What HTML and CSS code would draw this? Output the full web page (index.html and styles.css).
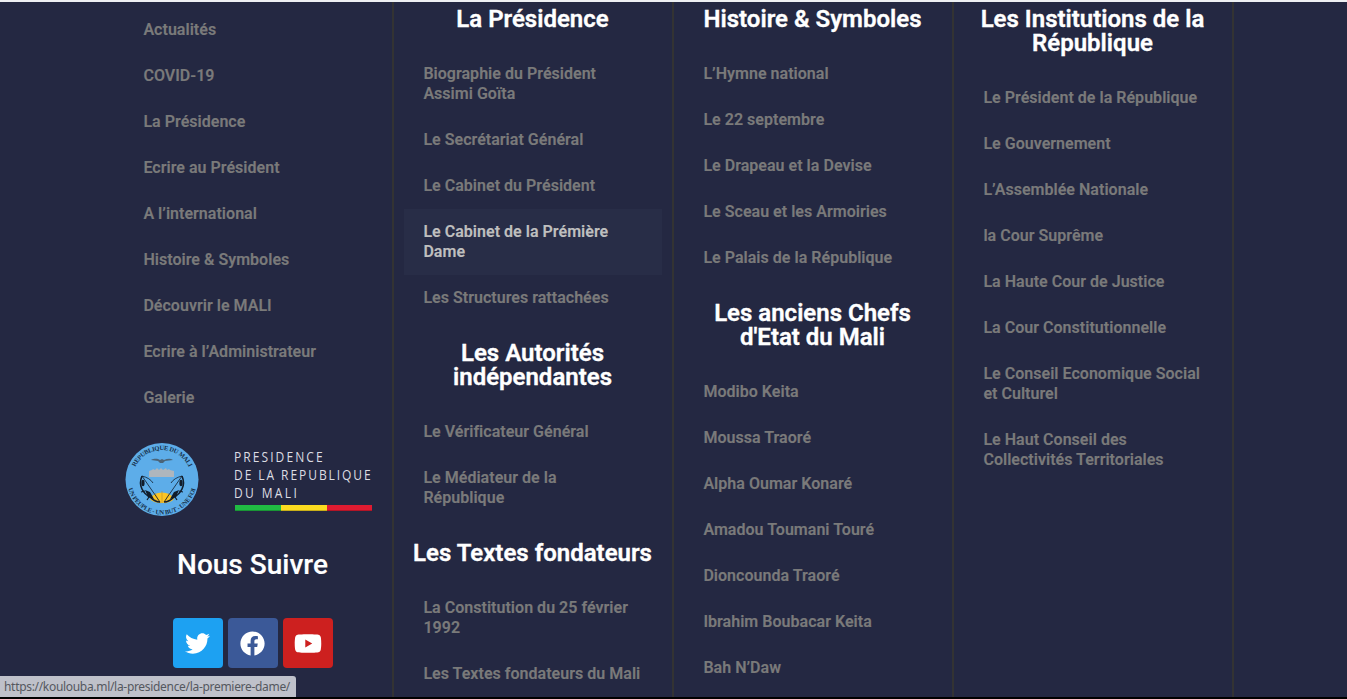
FILE: index.html
```html
<!DOCTYPE html>
<html lang="fr">
<head>
<meta charset="utf-8">
<title>Présidence de la République du Mali</title>
<link rel="stylesheet" href="styles.css">
</head>
<body>
<footer class="footer">
  <div class="column">
    <ul class="menu">
      <li><a>Actualités</a></li><li><a>COVID-19</a></li><li><a>La Présidence</a></li><li><a>Ecrire au Président</a></li><li><a>A l’international</a></li><li><a>Histoire &amp; Symboles</a></li><li><a>Découvrir le MALI</a></li><li><a>Ecrire à l’Administrateur</a></li><li><a>Galerie</a></li>
    </ul>
    <svg class="logo" viewBox="20 0 258 80" width="258" height="80">
      <defs>
        <path id="arc-top" d="M28.500 38.500a29.500 29.500 0 0 1 59 0"/>
        <path id="arc-bottom" d="M23 38.500a35 35 0 0 0 70 0"/>
      </defs>
      <circle cx="58" cy="38.500" r="36.500" fill="#5dade9"/>
      <text class="seal-text"><textPath href="#arc-top" startOffset="50%" text-anchor="middle" textLength="67">REPUBLIQUE DU MALI</textPath></text>
      <text class="seal-text"><textPath href="#arc-bottom" startOffset="50%" text-anchor="middle" textLength="91">UN PEUPLE - UN BUT - UNE FOI</textPath></text>
      <path d="M47 19c4-2 7-1 9 0l2-1 2 1c3-1 6-2 9 0l-8 1-2 2h-3l-2-2z" fill="#4b6478"/>
      <path d="M45 36v-6l3-1 1-1 2 1 2-2 2 2 2-2 2 2 3-2 1 2 2-1 1 1 4 1v6z" fill="#aeb6bd"/>
      <path d="M46 58a12.500 9 0 0 1 24 0q-3 4-12 4t-12-4z" fill="#fbc525"/>
      <path d="M58 62V50m-3 11-4-9m10 9 4-9m-8 10-9-5m13 5 9-5" stroke="#b98c30" stroke-width=".6" fill="none"/>
      <g fill="none" stroke="#111d2b">
        <path d="M38 35l18 26M78 35 60 61M38 35q8 2 11 7M78 35q-8 2-11 7" stroke-width=".8"/>
        <path d="M38 35q-3 7 0 13 3 6 8 8 5 5 10 5M78 35q3 7 0 13-3 6-8 8-5 5-10 5" stroke-width="1.600"/>
        <path d="M41 50l-4 1m8 5-2 3m32-9 4 1m-8 5 2 3" stroke-width="1.200"/>
      </g>
      <ellipse cx="39" cy="42" rx="1.600" ry="3.200" fill="#111d2b"/>
      <ellipse cx="77" cy="42" rx="1.600" ry="3.200" fill="#111d2b"/>
      <path d="M41 49l5 2 4 7-6-2zM75 49l-5 2-4 7 6-2z" fill="#111d2b"/>
      <g class="logo-text" transform="translate(130 0) scale(.86 1)">
        <text x="0" y="21.300" textLength="103">PRESIDENCE</text>
        <text x="0" y="39" textLength="159">DE LA REPUBLIQUE</text>
        <text x="0" y="56.600" textLength="73">DU MALI</text>
      </g>
      <path d="M131 64h46v6h-46z" fill="#20bb43"/><path d="M177 64h46v6h-46z" fill="#fbdb20"/><path d="M223 64h45v6h-45z" fill="#df1b31"/>
      <path d="M131 69h137v1H131z" fill="#000" opacity=".2"/>
    </svg>
    <h2 class="follow">Nous Suivre</h2>
    <div class="social">
      <a class="social-link twitter"><svg viewBox="0 0 512 512" width="25" height="25"><path d="M459.370 151.716c.325 4.548.325 9.097.325 13.645 0 138.720-105.583 298.558-298.558 298.558-59.452 0-114.680-17.219-161.137-47.106 8.447.974 16.568 1.299 25.340 1.299 49.055 0 94.213-16.568 130.274-44.832-46.132-.975-84.792-31.188-98.112-72.772 6.498.974 12.995 1.624 19.818 1.624 9.421 0 18.843-1.300 27.614-3.573-48.081-9.747-84.143-51.980-84.143-102.985v-1.299c13.969 7.797 30.214 12.670 47.431 13.319-28.264-18.843-46.781-51.005-46.781-87.391 0-19.492 5.197-37.360 14.294-52.954 51.655 63.675 129.300 105.258 216.365 109.807-1.624-7.797-2.599-15.918-2.599-24.040 0-57.828 46.782-104.934 104.934-104.934 30.213 0 57.502 12.670 76.670 33.137 23.715-4.548 46.456-13.320 66.599-25.340-7.798 24.366-24.366 44.833-46.132 57.827 21.117-2.273 41.584-8.122 60.426-16.243-14.292 20.791-32.161 39.308-52.628 54.253z"/></svg></a>
      <a class="social-link facebook"><svg viewBox="0 0 512 512" width="25" height="25"><path d="M504 256C504 119 393 8 256 8S8 119 8 256c0 123.780 90.690 226.380 209.250 245V327.690h-63V256h63v-54.640c0-62.150 37-96.480 93.670-96.480 27.140 0 55.520 4.840 55.520 4.840v61h-31.280c-30.800 0-40.410 19.120-40.410 38.730V256h68.780l-11 71.690h-57.780V501C413.310 482.380 504 379.780 504 256z"/></svg></a>
      <a class="social-link youtube"><svg viewBox="0 0 576 512" width="28" height="25"><path d="M549.655 124.083c-6.281-23.650-24.787-42.276-48.284-48.597C458.781 64 288 64 288 64S117.220 64 74.629 75.486c-23.497 6.322-42.003 24.947-48.284 48.597-11.412 42.867-11.412 132.305-11.412 132.305s0 89.438 11.412 132.305c6.281 23.650 24.787 41.500 48.284 47.821C117.220 448 288 448 288 448s170.780 0 213.371-11.486c23.497-6.321 42.003-24.171 48.284-47.821 11.412-42.867 11.412-132.305 11.412-132.305s0-89.438-11.412-132.305zm-317.510 213.508V175.185l142.739 81.205-142.739 81.201z"/></svg></a>
    </div>
  </div>
  <div class="column">
    <h3 class="heading">La Présidence</h3>
    <ul class="menu">
      <li><a>Biographie du Président Assimi Goïta</a></li><li><a>Le Secrétariat Général</a></li><li><a>Le Cabinet du Président</a></li><li><a class="active">Le Cabinet de la Prémière Dame</a></li><li><a>Les Structures rattachées</a></li>
    </ul>
    <h3 class="heading">Les Autorités indépendantes</h3>
    <ul class="menu">
      <li><a>Le Vérificateur Général</a></li><li><a>Le Médiateur de la<br>République</a></li>
    </ul>
    <h3 class="heading">Les Textes fondateurs</h3>
    <ul class="menu">
      <li><a>La Constitution du 25 février 1992</a></li><li><a>Les Textes fondateurs du Mali</a></li>
    </ul>
  </div>
  <div class="column">
    <h3 class="heading">Histoire &amp; Symboles</h3>
    <ul class="menu">
      <li><a>L’Hymne national</a></li><li><a>Le 22 septembre</a></li><li><a>Le Drapeau et la Devise</a></li><li><a>Le Sceau et les Armoiries</a></li><li><a>Le Palais de la République</a></li>
    </ul>
    <h3 class="heading">Les anciens Chefs d'Etat du Mali</h3>
    <ul class="menu">
      <li><a>Modibo Keita</a></li><li><a>Moussa Traoré</a></li><li><a>Alpha Oumar Konaré</a></li><li><a>Amadou Toumani Touré</a></li><li><a>Dioncounda Traoré</a></li><li><a>Ibrahim Boubacar Keita</a></li><li><a>Bah N’Daw</a></li>
    </ul>
  </div>
  <div class="column">
    <h3 class="heading">Les Institutions de la République</h3>
    <ul class="menu">
      <li><a>Le Président de la République</a></li><li><a>Le Gouvernement</a></li><li><a>L’Assemblée Nationale</a></li><li><a>la Cour Suprême</a></li><li><a>La Haute Cour de Justice</a></li><li><a>La Cour Constitutionnelle</a></li><li><a>Le Conseil Economique Social et Culturel</a></li><li><a>Le Haut Conseil des Collectivités Territoriales</a></li>
    </ul>
  </div>
</footer>
<div class="status">https://koulouba.ml/la-presidence/la-premiere-dame/</div>
</body>
</html>
```
FILE: styles.css
```css
* { box-sizing: border-box; }
body {
  margin: 0;
  height: 699px;
  overflow: hidden;
  background: #242842;
  border-top: 2px solid #eef0f3;
  border-bottom: 2px solid #000;
  font-family: Roboto, sans-serif;
}
.footer {
  display: flex;
  width: 1120px;
  height: 695px;
  margin-left: 114px;
}
.column {
  display: flex;
  flex-direction: column;
  gap: 20px;
  width: 280px;
  padding: 5px 10px 0;
  border-right: 2px solid #333;
}
.menu { margin: 0; padding: 0; list-style: none; }
.menu a {
  display: block;
  padding: 13px 19px 13px 19.4px;
  color: #7a7a7a;
  font-size: 16px;
  font-weight: 600;
  line-height: 20px;
  letter-spacing: .03px;
  -webkit-text-stroke: .15px currentColor;
}
.menu .active { color: #bfbfbf; background: #282d47; }
.heading {
  margin: 0 1px 0 0;
  color: #fff;
  font-size: 24px;
  font-weight: 600;
  line-height: 24px;
  text-align: center;
  -webkit-text-stroke: .35px currentColor;
}
.logo { display: block; flex: none; overflow: visible; }
.seal-text { font: bold 6.4px "Liberation Serif", serif; fill: #16304b; }
.logo-text { font: 14px "Open Sans", sans-serif; fill: #dcdde3; }
.follow {
  margin: 10px 1px 0 0;
  color: #fff;
  font-size: 28px;
  font-weight: 500;
  line-height: 28px;
  text-align: center;
  -webkit-text-stroke: .15px currentColor;
}
.social { display: flex; justify-content: center; gap: 5px; margin-top: 19px; }
.social-link {
  display: flex;
  align-items: center;
  justify-content: center;
  width: 50px;
  height: 50px;
  padding-right: 1px;
  border-radius: 4px;
  fill: #fff;
}
.twitter { background: #1da1f2; }
.facebook { background: #3b5998; }
.youtube { background: #cd201f; }
.status {
  position: absolute;
  left: 0;
  bottom: 2px;
  width: 296px;
  height: 21px;
  padding-left: 4px;
  border-top-right-radius: 3px;
  background: #bfc1ca;
  color: #55585f;
  font: 12px/21px "Noto Sans", sans-serif;
  letter-spacing: -.31px;
  white-space: nowrap;
}
```
